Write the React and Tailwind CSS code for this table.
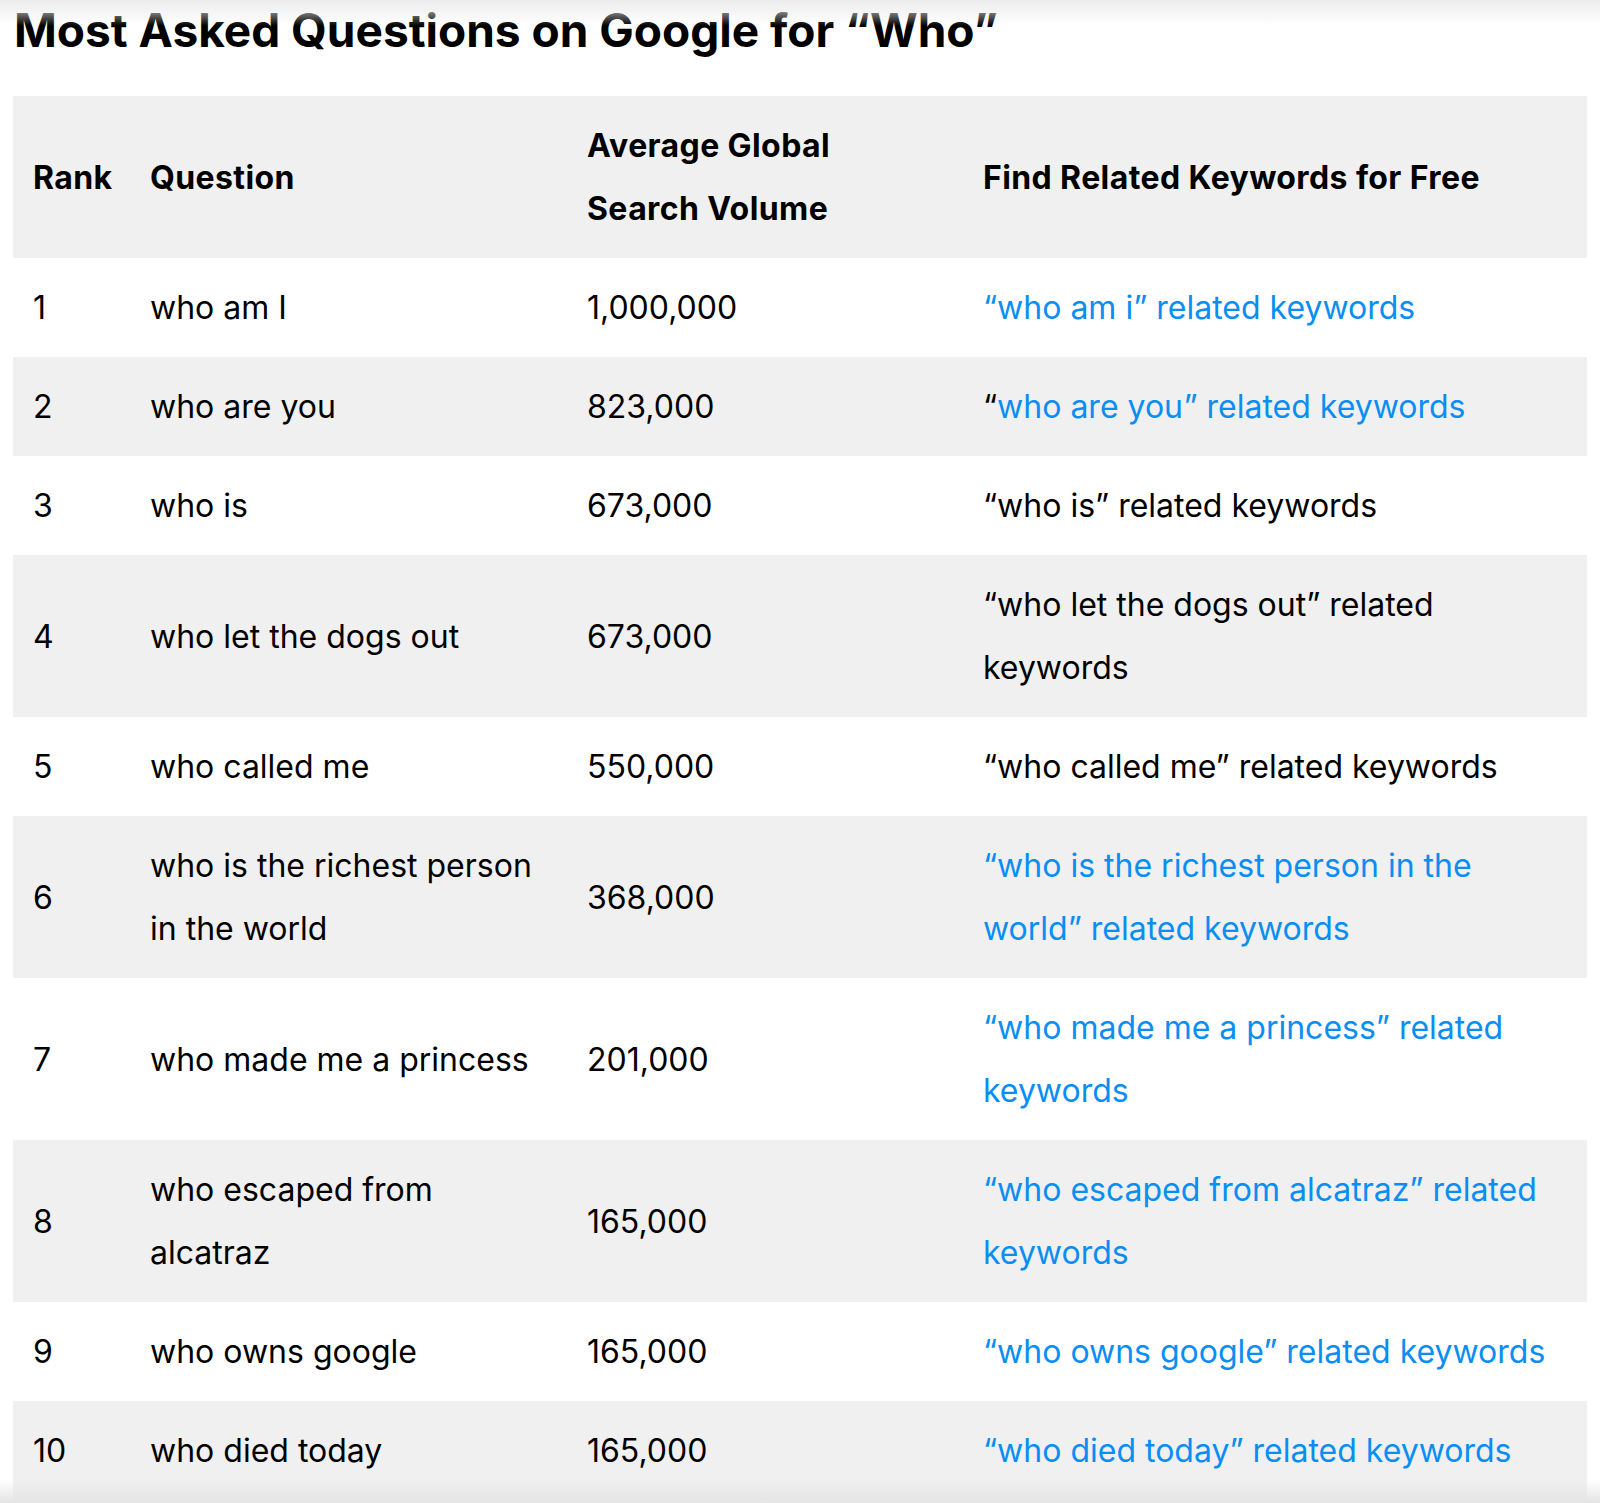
const rows = [
  { rank: "1", q: "who am I", vol: "1,000,000", kw: "“who am i” related keywords", link: "all" },
  { rank: "2", q: "who are you", vol: "823,000", kw: "who are you” related keywords", link: "partial" },
  { rank: "3", q: "who is", vol: "673,000", kw: "“who is” related keywords", link: "none" },
  { rank: "4", q: "who let the dogs out", vol: "673,000", kw: "“who let the dogs out” related keywords", link: "none" },
  { rank: "5", q: "who called me", vol: "550,000", kw: "“who called me” related keywords", link: "none" },
  { rank: "6", q: "who is the richest person in the world", vol: "368,000", kw: "“who is the richest person in the world” related keywords", link: "all" },
  { rank: "7", q: "who made me a princess", vol: "201,000", kw: "“who made me a princess” related keywords", link: "all" },
  { rank: "8", q: "who escaped from alcatraz", vol: "165,000", kw: "“who escaped from alcatraz” related keywords", link: "all" },
  { rank: "9", q: "who owns google", vol: "165,000", kw: "“who owns google” related keywords", link: "all" },
  { rank: "10", q: "who died today", vol: "165,000", kw: "“who died today” related keywords", link: "all" },
];

const cell = "px-5 py-[18px] flex items-center";

const Keyword = ({ row }) => {
  if (row.link === "all") return <span className="text-[#0a8ef2]">{row.kw}</span>;
  if (row.link === "partial")
    return (
      <span>
        “<span className="text-[#0a8ef2]">{row.kw}</span>
      </span>
    );
  return <span>{row.kw}</span>;
};

export default function App() {
  return (
    <div
      className="relative min-h-[1503px] bg-white text-black overflow-hidden"
      style={{ fontFamily: "Inter, 'Liberation Sans', sans-serif" }}
    >
      {/* top shade */}
      <div className="pointer-events-none absolute top-0 left-0 right-0 h-[26px] bg-gradient-to-b from-[#ececec] to-transparent" />

      <h1 className="px-[14px] pt-[3px] text-[46px] font-bold leading-[54px] tracking-[0px]">
        Most Asked Questions on Google for “Who”
      </h1>

      <div className="mx-[13px] mt-[39px] text-[32px] leading-[63px]">
        {/* HEADER */}
        <div className="grid grid-cols-[117px_437px_396px_1fr] bg-[#f0f0f0] font-bold tracking-[0.4px]">
          <div className={cell}>Rank</div>
          <div className={cell}>Question</div>
          <div className={cell}>
            <span>
              Average Global
              <br />
              Search Volume
            </span>
          </div>
          <div className={cell}>Find Related Keywords for Free</div>
        </div>

        {/* ROWS */}
        {rows.map((row, i) => (
          <div
            key={row.rank}
            className={`grid grid-cols-[117px_437px_396px_1fr] ${i % 2 === 1 ? "bg-[#f0f0f0]" : "bg-white"}`}
          >
            <div className={cell}>{row.rank}</div>
            <div className={cell}>{row.q}</div>
            <div className={cell}>{row.vol}</div>
            <div className={cell}>
              <Keyword row={row} />
            </div>
          </div>
        ))}
      </div>

      {/* bottom shade */}
      <div className="pointer-events-none absolute bottom-0 left-0 right-0 h-[24px] bg-gradient-to-t from-[#e4e4e4] to-transparent" />
    </div>
  );
}
